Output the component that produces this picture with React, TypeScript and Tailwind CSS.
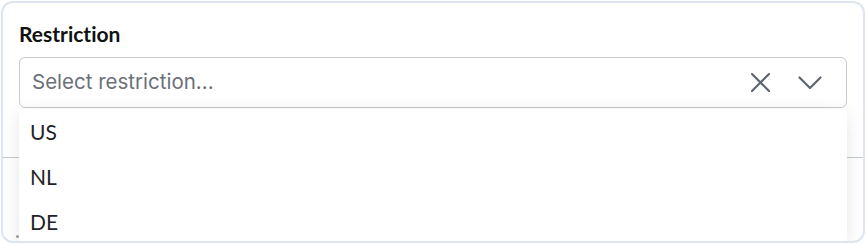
const options = ['US', 'NL', 'DE'];

export default function App() {
  return (
    <div className="w-[866px] h-[244px] bg-white p-px font-['Lato',sans-serif] [font-variant-ligatures:none]">
      <div className="relative h-[242px] w-[864px] overflow-hidden rounded-xl border-2 border-[#dde6f0] bg-white">
        <div className="px-4 pt-[18px]">
          <label className="block text-[21px] font-bold leading-[26px] text-[#111]">Restriction</label>
          <div className="relative mt-[10px]">
            <div className="flex h-[51px] items-center rounded-md border border-[#c9c9ce] bg-white pl-[12px] pr-6">
              <span className="flex-1 font-['Inter',sans-serif] text-[20.5px] text-[#6b7078]">Select restriction...</span>
              <svg width="19" height="19" viewBox="0 0 19 19" className="text-[#5f6670]">
                <path d="M1 1 L18 18 M18 1 L1 18" stroke="currentColor" strokeWidth="2.2" strokeLinecap="round" fill="none" />
              </svg>
              <svg width="24" height="14" viewBox="0 0 24 14" className="ml-[28px] text-[#5f6670]">
                <path d="M1.5 1.5 L12 12 L22.5 1.5" stroke="currentColor" strokeWidth="2.2" strokeLinecap="round" strokeLinejoin="round" fill="none" />
              </svg>
            </div>
            <ul className="absolute left-0 right-0 top-full z-10 mt-px rounded-md bg-white shadow-[0_4px_18px_rgba(0,0,0,0.10)]">
              {options.map((opt) => (
                <li key={opt} className="flex h-[45px] items-center pl-[11px] text-[21px] text-[#1f2329]">
                  {opt}
                </li>
              ))}
            </ul>
          </div>
        </div>
        <div className="mt-[49px] border-t border-[#c3c7ce]" />
        <div className="absolute bottom-[3px] left-[13px] h-[3px] w-[3px] rounded-full bg-[#9aa0a8]" />
      </div>
    </div>
  );
}
